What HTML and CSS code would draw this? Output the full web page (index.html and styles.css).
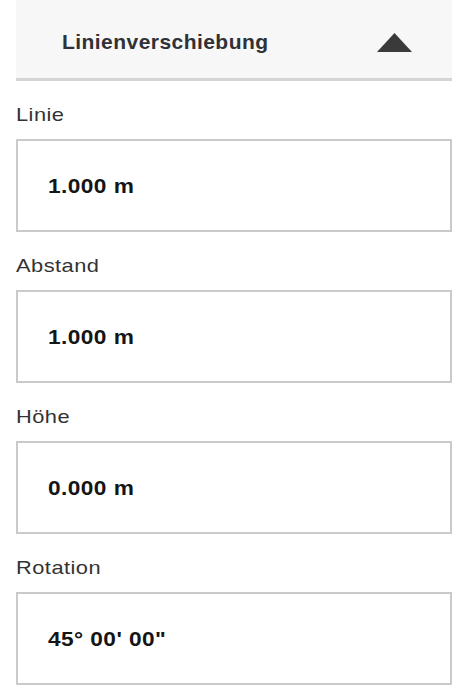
FILE: index.html
```html
<!DOCTYPE html>
<html lang="de">
<head>
<meta charset="utf-8">
<title>Linienverschiebung</title>
<link rel="stylesheet" href="styles.css">
</head>
<body>
<div class="panel">
  <div class="panel-header">
    <span class="panel-title">Linienverschiebung</span>
    <svg class="toggle" width="35" height="19" viewBox="0 0 35 19" aria-hidden="true">
      <polygon points="17.5,0 35,19 0,19" fill="#3a3a3a"/>
    </svg>
  </div>
  <div class="fields">
    <div class="field">
      <div class="field-label"><span class="label-text">Linie</span></div>
      <div class="field-box"><span class="value-text">1.000 m</span></div>
    </div>
    <div class="field">
      <div class="field-label"><span class="label-text">Abstand</span></div>
      <div class="field-box"><span class="value-text">1.000 m</span></div>
    </div>
    <div class="field">
      <div class="field-label"><span class="label-text">Höhe</span></div>
      <div class="field-box"><span class="value-text">0.000 m</span></div>
    </div>
    <div class="field">
      <div class="field-label"><span class="label-text">Rotation</span></div>
      <div class="field-box"><span class="value-text">45° 00' 00"</span></div>
    </div>
  </div>
</div>
</body>
</html>
```

FILE: styles.css
```css
html, body {
  margin: 0;
  padding: 0;
  background: #ffffff;
}

body {
  font-family: "Liberation Sans", Arial, sans-serif;
  color: #333333;
}

.panel {
  width: 436px;
  padding-left: 16px;
}

.panel-header {
  box-sizing: border-box;
  height: 81px;
  padding: 6px 40px 0 46px;
  background: #f7f7f7;
  border-bottom: 3px solid #d5d5d5;
  display: flex;
  align-items: center;
  justify-content: space-between;
}

.panel-title {
  font-size: 21px;
  font-weight: bold;
  letter-spacing: 0.45px;
  color: #2f3136;
}

.toggle {
  display: block;
}

.fields {
  display: flex;
  flex-direction: column;
  gap: 23px;
  padding-top: 23px;
}

.field {
  display: flex;
  flex-direction: column;
  gap: 13px;
}

.field-label {
  font-size: 18.5px;
  line-height: 22px;
  color: #333333;
}

.label-text {
  display: inline-block;
  letter-spacing: 0.4px;
  transform: scaleX(1.18);
  transform-origin: left center;
}

.field-box {
  box-sizing: border-box;
  height: 93px;
  border: 2px solid #cacaca;
  padding-left: 30px;
  display: flex;
  align-items: center;
  font-size: 21px;
  font-weight: bold;
  color: #151515;
}

.value-text {
  display: inline-block;
  letter-spacing: 0.4px;
  transform: scaleX(1.08);
  transform-origin: left center;
}
```
